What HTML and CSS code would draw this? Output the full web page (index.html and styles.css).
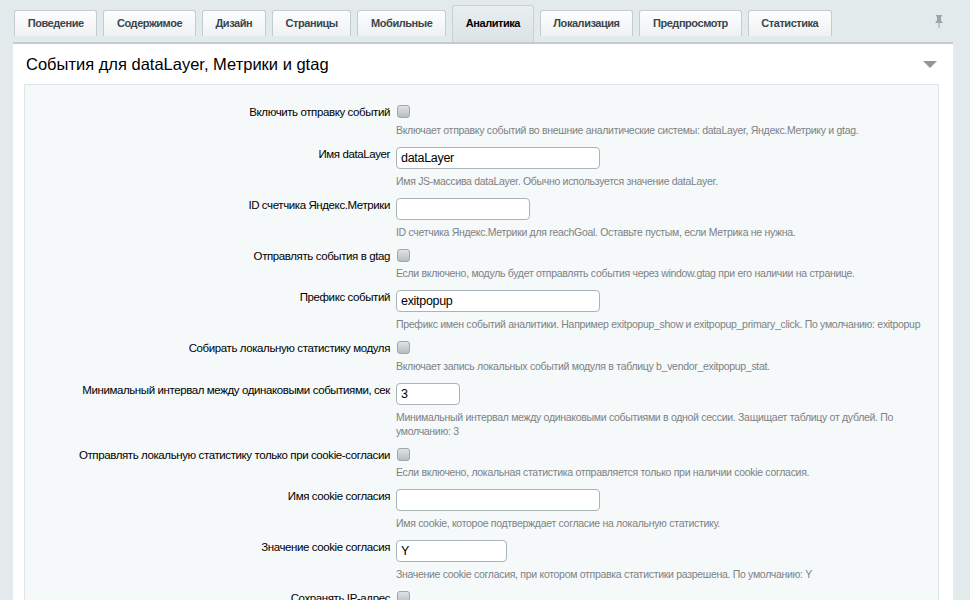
FILE: index.html
```html
<!DOCTYPE html>
<html lang="ru">
<head>
    <meta charset="UTF-8">
    <title>Настройки модуля</title>
    <link rel="stylesheet" href="styles.css">
</head>
<body>
    <div class="tabs">
        <div class="tab">Поведение</div>
        <div class="tab">Содержимое</div>
        <div class="tab">Дизайн</div>
        <div class="tab">Страницы</div>
        <div class="tab">Мобильные</div>
        <div class="tab active">Аналитика</div>
        <div class="tab">Локализация</div>
        <div class="tab">Предпросмотр</div>
        <div class="tab">Статистика</div>
        <span class="pin" title="Закрепить">
            <svg width="10" height="14" viewBox="0 0 10 14">
                <path d="M2 1h6v1.5H7v4l1.5 1.5v1H1.5V8L3 6.5v-4H2z" fill="#9ba4a8"/>
                <rect x="4.5" y="9" width="1" height="5" fill="#9ba4a8"/>
            </svg>
        </span>
    </div>

    <div class="panel">
        <div class="panel-head">
            <h2>События для dataLayer, Метрики и gtag</h2>
            <span class="collapse"></span>
        </div>

        <div class="panel-body">
            <div class="field">
                <label class="field-label">Включить отправку событий</label>
                <div class="field-control">
                    <input type="checkbox">
                    <div class="hint">Включает отправку событий во внешние аналитические системы: dataLayer, Яндекс.Метрику и gtag.</div>
                </div>
            </div>

            <div class="field">
                <label class="field-label">Имя dataLayer</label>
                <div class="field-control">
                    <input type="text" class="w-lg" value="dataLayer">
                    <div class="hint">Имя JS-массива dataLayer. Обычно используется значение dataLayer.</div>
                </div>
            </div>

            <div class="field">
                <label class="field-label">ID счетчика Яндекс.Метрики</label>
                <div class="field-control">
                    <input type="text" class="w-md" value="">
                    <div class="hint">ID счетчика Яндекс.Метрики для reachGoal. Оставьте пустым, если Метрика не нужна.</div>
                </div>
            </div>

            <div class="field">
                <label class="field-label">Отправлять события в gtag</label>
                <div class="field-control">
                    <input type="checkbox">
                    <div class="hint">Если включено, модуль будет отправлять события через window.gtag при его наличии на странице.</div>
                </div>
            </div>

            <div class="field">
                <label class="field-label">Префикс событий</label>
                <div class="field-control">
                    <input type="text" class="w-lg" value="exitpopup">
                    <div class="hint">Префикс имен событий аналитики. Например exitpopup_show и exitpopup_primary_click. По умолчанию: exitpopup</div>
                </div>
            </div>

            <div class="field">
                <label class="field-label">Собирать локальную статистику модуля</label>
                <div class="field-control">
                    <input type="checkbox">
                    <div class="hint">Включает запись локальных событий модуля в таблицу b_vendor_exitpopup_stat.</div>
                </div>
            </div>

            <div class="field">
                <label class="field-label">Минимальный интервал между одинаковыми событиями, сек</label>
                <div class="field-control">
                    <input type="text" class="w-xs" value="3">
                    <div class="hint">Минимальный интервал между одинаковыми событиями в одной сессии. Защищает таблицу от дублей. По умолчанию: 3</div>
                </div>
            </div>

            <div class="field">
                <label class="field-label">Отправлять локальную статистику только при cookie-согласии</label>
                <div class="field-control">
                    <input type="checkbox">
                    <div class="hint">Если включено, локальная статистика отправляется только при наличии cookie согласия.</div>
                </div>
            </div>

            <div class="field">
                <label class="field-label">Имя cookie согласия</label>
                <div class="field-control">
                    <input type="text" class="w-lg" value="">
                    <div class="hint">Имя cookie, которое подтверждает согласие на локальную статистику.</div>
                </div>
            </div>

            <div class="field">
                <label class="field-label">Значение cookie согласия</label>
                <div class="field-control">
                    <input type="text" class="w-sm" value="Y">
                    <div class="hint">Значение cookie согласия, при котором отправка статистики разрешена. По умолчанию: Y</div>
                </div>
            </div>

            <div class="field">
                <label class="field-label">Сохранять IP-адрес</label>
                <div class="field-control">
                    <input type="checkbox">
                    <div class="hint">Если включено, вместе с событием сохраняется IP-адрес посетителя.</div>
                </div>
            </div>
        </div>
    </div>
</body>
</html>
```

FILE: styles.css
```css
:root {
    --page: #e3eaec;
    --panel: #ffffff;
    --box: #f5f9f9;
    --box-border: #dde6e8;
    --tab-border: #c3cdd1;
    --text: #000000;
    --hint: #7d8285;
    --input-border: #a9b4b8;
}

* {
    box-sizing: border-box;
}

body {
    margin: 0;
    background: var(--page);
    font-family: 'Liberation Sans', Arial, sans-serif;
    color: var(--text);
    overflow: hidden;
}

/* tab strip */
.tabs {
    display: flex;
    align-items: flex-start;
    gap: 6px;
    height: 42px;
    padding-left: 14px;
    position: relative;
}

.tab {
    margin-top: 10px;
    height: 26px;
    padding: 0 12.7px;
    line-height: 25px;
    font-size: 11px;
    font-weight: bold;
    letter-spacing: -0.45px;
    color: #3b454c;
    background: linear-gradient(#fdfefe, #eef2f3);
    border: 1px solid var(--tab-border);
    border-bottom: none;
    border-radius: 3px 3px 0 0;
    white-space: nowrap;
}

.tab.active {
    margin-top: 5px;
    height: 37px;
    line-height: 34px;
    color: #000;
    background: linear-gradient(#e9eff0, #dbe3e5);
    border-color: #c8d1d4;
}

.pin {
    position: absolute;
    left: 934px;
    top: 14px;
}

/* settings panel */
.panel {
    margin: 0 17px 0 13px;
    background: var(--panel);
    border-top: 2px solid #c4ccd0;
    min-height: 600px;
}

.panel-head {
    display: flex;
    align-items: center;
    justify-content: space-between;
    height: 40px;
    padding: 0 16px 0 13px;
}

.panel-head h2 {
    margin: 0;
    font-size: 16.5px;
    font-weight: normal;
    color: #000;
}

.collapse {
    width: 0;
    height: 0;
    border-left: 7px solid transparent;
    border-right: 7px solid transparent;
    border-top: 7px solid #8e979b;
}

.panel-body {
    margin: 0 14px 0 11px;
    padding: 20px 12px 0 0;
    background: var(--box);
    border: 1px solid var(--box-border);
    min-height: 560px;
}

.field {
    display: grid;
    grid-template-columns: 365px 1fr;
    column-gap: 6px;
    padding-bottom: 10px;
}

.field-label {
    text-align: right;
    font-size: 11.5px;
    letter-spacing: -0.4px;
    line-height: 14px;
}

.field-control input[type="checkbox"] {
    appearance: none;
    -webkit-appearance: none;
    display: block;
    width: 13px;
    height: 13px;
    margin: 0 0 0 1px;
    border: 1px solid #9fa7ab;
    border-radius: 3px;
    background: linear-gradient(#dfe3e5, #b7bec1);
}

.field-control input[type="checkbox"] + .hint {
    margin-top: 4.6px;
}

.field-control input[type="text"] {
    display: block;
    height: 22px;
    margin: 0 0 1px;
    padding: 0 4px;
    font-family: 'Liberation Sans', Arial, sans-serif;
    font-size: 12.5px;
    letter-spacing: -0.3px;
    color: #000;
    background: #fff;
    border: 1px solid var(--input-border);
    border-radius: 4px;
}

.w-lg { width: 204px; }
.w-md { width: 134px; }
.w-sm { width: 111px; }
.w-xs { width: 64px; }

.hint {
    margin-top: 5px;
    font-size: 10.5px;
    letter-spacing: -0.3px;
    line-height: 14px;
    color: var(--hint);
}
```
